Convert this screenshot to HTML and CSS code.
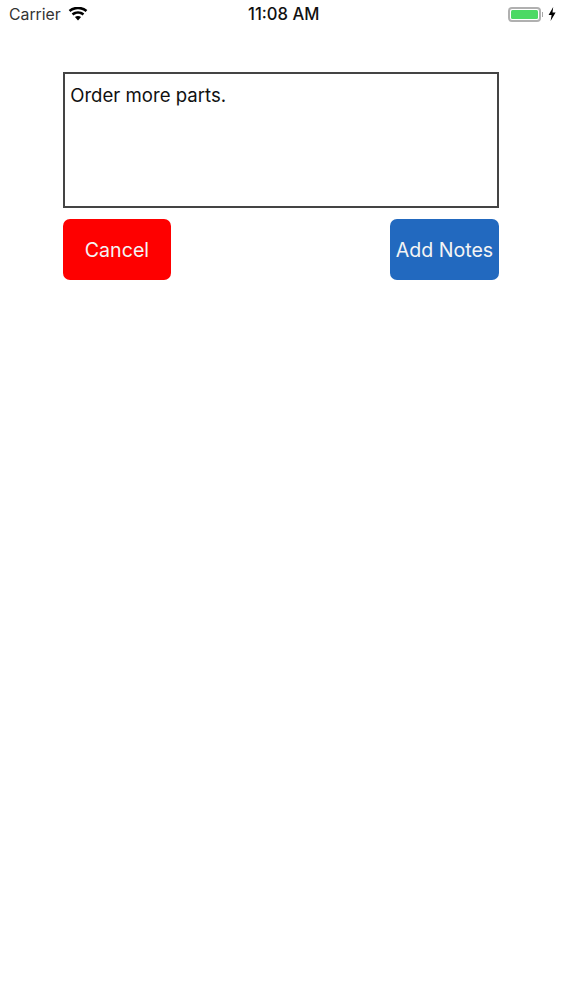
FILE: index.html
```html
<!DOCTYPE html>
<html lang="en">
<head>
    <meta charset="UTF-8">
    <meta name="viewport" content="width=device-width, initial-scale=1.0">
    <title>Add Notes</title>
    <link rel="stylesheet" href="styles.css">
</head>
<body>
    <div class="status-bar">
        <div class="status-left">
            <span class="carrier">Carrier</span>
            <svg class="wifi" width="20" height="14" viewBox="0 0 20 14">
                <path d="M10 13.6 L6.9 10 C8.7 8.5 11.3 8.5 13.1 10 Z" fill="#000"/>
                <path d="M5.4 8.4 L3.7 6.4 C7.3 3.4 12.7 3.4 16.3 6.4 L14.6 8.4 C11.9 6.2 8.1 6.2 5.4 8.4 Z" fill="#000"/>
                <path d="M2.4 4.9 L0.7 2.9 C6.1 -1.4 13.9 -1.4 19.3 2.9 L17.6 4.9 C13.1 1.4 6.9 1.4 2.4 4.9 Z" fill="#000"/>
            </svg>
        </div>
        <div class="status-time">11:08 AM</div>
        <div class="status-right">
            <div class="battery"><div class="battery-level"></div></div>
            <div class="battery-tip"></div>
            <svg class="bolt" width="8" height="14" viewBox="0 0 8 14">
                <path d="M5.2 0 L0.6 8 L3.6 8 L2.6 14 L7.6 5.6 L4.5 5.6 Z" fill="#000"/>
            </svg>
        </div>
    </div>

    <div class="content">
        <div class="notes-box">Order more parts.</div>
        <div class="buttons">
            <div class="btn cancel">Cancel</div>
            <div class="btn add">Add Notes</div>
        </div>
    </div>
</body>
</html>
```

FILE: styles.css
```css
html, body {
    margin: 0;
    padding: 0;
}

body {
    background: #fff;
    color: #111;
    font-family: Inter, "Liberation Sans", sans-serif;
    height: 1000px;
    overflow: hidden;
}

.status-bar {
    height: 28px;
    display: flex;
    align-items: center;
    justify-content: space-between;
    padding: 0 7px 0 9px;
    position: relative;
}

.status-left {
    display: flex;
    align-items: center;
    gap: 7px;
}

.carrier {
    font-size: 15.8px;
    color: #333;
}

.wifi {
    margin-top: -1px;
}

.status-time {
    position: absolute;
    left: 248px;
    font-size: 16.6px;
    font-weight: 500;
}

.status-right {
    display: flex;
    align-items: center;
}

.battery {
    width: 33px;
    height: 15px;
    box-sizing: border-box;
    border: 2px solid #b0b0b0;
    border-radius: 4px;
    padding: 1px;
}

.battery-level {
    height: 100%;
    background: #4cd964;
    border-radius: 1.5px;
}

.battery-tip {
    width: 1.5px;
    height: 5px;
    margin-left: 1px;
    background: #a8a8a8;
}

.bolt {
    margin-left: 5px;
}

.content {
    padding: 44px 64.3px 0 62.7px;
}

.notes-box {
    height: 136px;
    box-sizing: border-box;
    border: 2px solid #444;
    padding: 8px 5.5px;
    font-size: 18.6px;
    line-height: 26px;
}

.buttons {
    display: flex;
    justify-content: space-between;
    margin-top: 11px;
}

.btn {
    width: 108.5px;
    height: 61px;
    border-radius: 7px;
    color: #f4f4f4;
    font-size: 19.6px;
    display: flex;
    align-items: center;
    justify-content: center;
    white-space: nowrap;
}

.cancel {
    background: #fe0000;
}

.add {
    background: #2269bf;
}
```
